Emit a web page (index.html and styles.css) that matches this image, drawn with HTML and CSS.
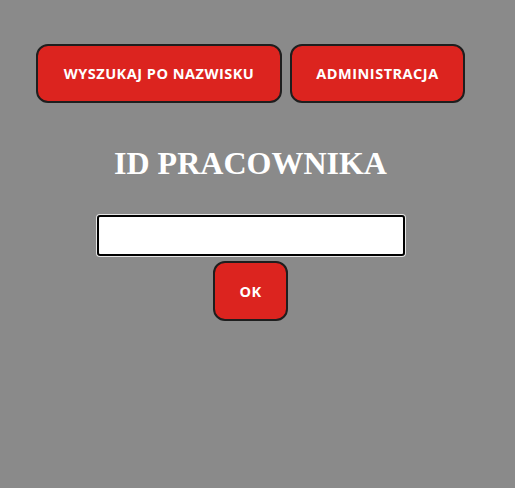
FILE: index.html
```html
<!DOCTYPE html>
<html lang="pl">
<head>
<meta charset="utf-8">
<title>ID pracownika</title>
<link rel="stylesheet" href="styles.css">
</head>
<body>
<div class="page">
  <nav class="nav">
    <button class="btn btn-wide" type="button">WYSZUKAJ PO NAZWISKU</button>
    <button class="btn btn-admin" type="button">ADMINISTRACJA</button>
  </nav>
  <h1 class="title">ID PRACOWNIKA</h1>
  <form class="form">
    <input class="field" type="text">
    <button class="btn btn-ok" type="button">OK</button>
  </form>
</div>
</body>
</html>
```
FILE: styles.css
```css
html, body {
  margin: 0;
  padding: 0;
  background: #8a8a8a;
  height: 100%;
}
.page {
  width: 485px;
  margin-left: 8px;
  padding-top: 44px;
}
.nav {
  display: flex;
  justify-content: center;
  gap: 8px;
}
.btn {
  background: #dc241f;
  color: #ffffff;
  border: 2px solid #1e1e1e;
  border-radius: 12px;
  font-family: "Open Sans", "Liberation Sans", sans-serif;
  font-weight: 700;
  font-size: 14.5px;
  letter-spacing: 0.5px;
  line-height: 19px;
  box-sizing: border-box;
  height: 59px;
  padding: 0;
  cursor: pointer;
}
.btn-wide {
  width: 246px;
}
.btn-admin {
  width: 175px;
}
.title {
  margin: 42px 0 33px;
  text-align: center;
  font-family: "Liberation Serif", "Times New Roman", serif;
  font-weight: 700;
  font-size: 32px;
  color: #ffffff;
}
.form {
  display: flex;
  flex-direction: column;
  align-items: center;
  gap: 5px;
}
.field {
  width: 308px;
  height: 41px;
  box-sizing: border-box;
  border: 2px solid #000000;
  border-radius: 3px;
  box-shadow: 0 0 0 1px #e6e6e6;
  background: #ffffff;
  margin: 0;
  padding: 2px 6px;
}
.btn-ok {
  width: 75px;
  height: 60px;
}
```
